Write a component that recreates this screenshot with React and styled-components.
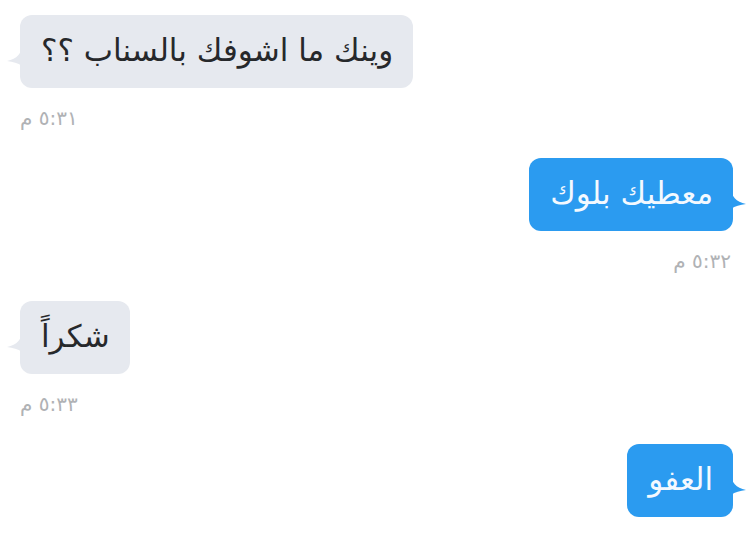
import React from 'react';
import styled, { createGlobalStyle } from 'styled-components';

const GlobalStyle = createGlobalStyle`
  html, body {
    margin: 0;
    padding: 0;
    background: #ffffff;
  }
  body {
    font-family: "DejaVu Sans", "Noto Sans", sans-serif;
    overflow: hidden;
  }
`;

const Thread = styled.div`
  display: flex;
  flex-direction: column;
  gap: 29px;
  padding: 15px 16px 0 20px;
  width: 749px;
  height: 539px;
  box-sizing: border-box;
  overflow: hidden;
`;

const Message = styled.div`
  display: flex;
  flex-direction: column;
  align-items: ${(p) => (p.$mine ? 'flex-end' : 'flex-start')};
`;

const Bubble = styled.div`
  position: relative;
  direction: rtl;
  box-sizing: border-box;
  height: 73px;
  padding: 17px 20px 19px 21px;
  border-radius: 12px;
  font-size: 31px;
  line-height: 37px;
  white-space: nowrap;
  background: ${(p) => (p.$mine ? '#2b9bf0' : '#e6e9ef')};
  color: ${(p) => (p.$mine ? '#f4f9ff' : '#26282b')};
`;

const Tail = styled.svg`
  position: absolute;
  top: 30px;
  width: 15px;
  height: 21px;
  ${(p) => (p.$mine ? 'right: -13px; transform: scaleX(-1);' : 'left: -13px;')}
`;

const Time = styled.div`
  direction: rtl;
  margin-top: 19px;
  font-size: 20px;
  line-height: 22px;
  color: #b0b2b5;
  letter-spacing: 1.5px;
  padding: ${(p) => (p.$mine ? '0 2px 0 0' : '0')};
`;

const messages = [
  { text: 'وينك ما اشوفك بالسناب ؟؟', time: '٥:٣١ م', mine: false },
  { text: 'معطيك بلوك', time: '٥:٣٢ م', mine: true },
  { text: 'شكراً', time: '٥:٣٣ م', mine: false },
  { text: 'العفو', time: '٥:٣٤ م', mine: true },
];

const BubbleTail = ({ mine }) => (
  <Tail $mine={mine} viewBox="0 0 15 21">
    <path
      d="M15 0 C15 8 10 14 0 16 C6 17 11 18 15 21 Z"
      fill={mine ? '#2b9bf0' : '#e6e9ef'}
    />
  </Tail>
);

export default function App() {
  return (
    <>
      <GlobalStyle />
      <Thread>
        {messages.map((m, i) => (
          <Message key={i} $mine={m.mine}>
            <Bubble $mine={m.mine}>
              {m.text}
              <BubbleTail mine={m.mine} />
            </Bubble>
            <Time $mine={m.mine}>{m.time}</Time>
          </Message>
        ))}
      </Thread>
    </>
  );
}
